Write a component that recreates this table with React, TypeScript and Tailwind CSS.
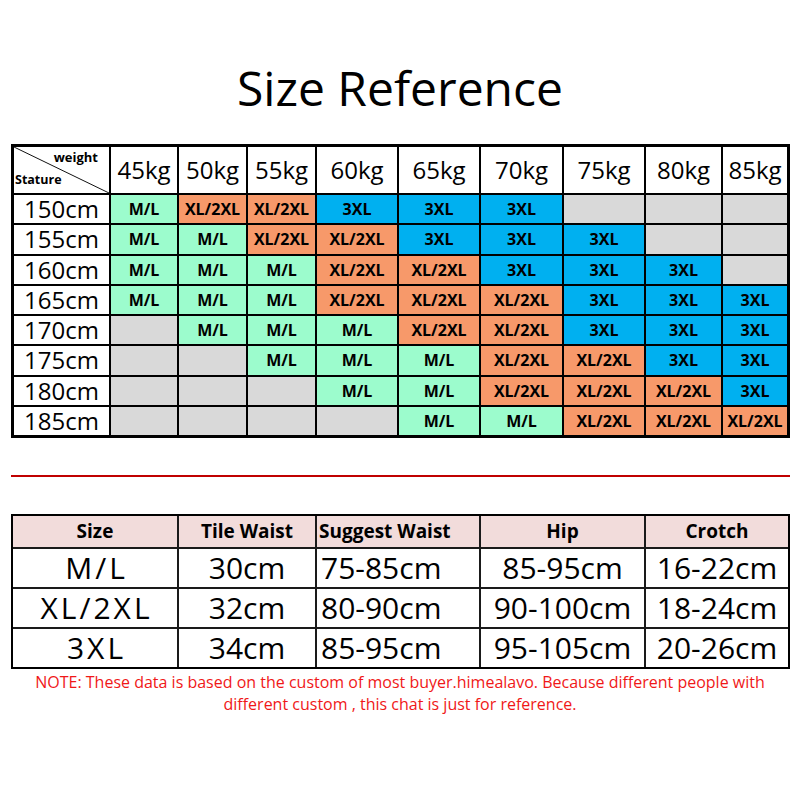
import React from 'react';

const weights = ['45kg', '50kg', '55kg', '60kg', '65kg', '70kg', '75kg', '80kg', '85kg'];

// g = M/L, o = XL/2XL, b = 3XL, - = empty
const chart: [string, string][] = [
  ['150cm', 'goobbb---'],
  ['155cm', 'ggoobbb--'],
  ['160cm', 'gggoobbb-'],
  ['165cm', 'gggooobbb'],
  ['170cm', '-gggoobbb'],
  ['175cm', '--gggoobb'],
  ['180cm', '---ggooob'],
  ['185cm', '----ggooo'],
];

const cellStyle: Record<string, { bg: string; label: string }> = {
  g: { bg: 'bg-[#9cfccd]', label: 'M/L' },
  o: { bg: 'bg-[#f7996a]', label: 'XL/2XL' },
  b: { bg: 'bg-[#00b0f0]', label: '3XL' },
  '-': { bg: 'bg-[#d9d9d9]', label: '' },
};

const sizes = [
  ['M/L', '30cm', '75-85cm', '85-95cm', '16-22cm'],
  ['XL/2XL', '32cm', '80-90cm', '90-100cm', '18-24cm'],
  ['3XL', '34cm', '85-95cm', '95-105cm', '20-26cm'],
];

export default function App() {
  return (
    <div className="w-[800px] h-[800px] bg-white text-black font-['Open_Sans','Noto_Sans',sans-serif]">
      <div className="h-[144px] pt-[58px] text-center text-[48px] leading-[60px]">Size Reference</div>

      {/* weight / stature chart */}
      <div className="ml-[11px] w-[779px] border-[3px] border-black bg-black grid grid-cols-[95px_66px_67px_67px_80px_80px_81px_80px_75px_64px] gap-[2px]">
        <div className="relative h-[46px] bg-white">
          <svg className="absolute inset-0" width="95" height="46" viewBox="0 0 95 46">
            <line x1="0" y1="0" x2="95" y2="46" stroke="#111" strokeWidth="1" />
          </svg>
          <span className="absolute right-[11px] top-[4px] text-[13px] font-bold leading-none">weight</span>
          <span className="absolute left-[1px] bottom-[7px] text-[12.5px] font-bold leading-none">Stature</span>
        </div>
        {weights.map(w => (
          <div key={w} className="h-[46px] bg-white flex items-center justify-center text-[24px]">
            {w}
          </div>
        ))}
        {chart.map(([stature, row]) => (
          <React.Fragment key={stature}>
            <div className="h-[28.25px] bg-white flex items-center justify-center text-[24px] leading-none">
              {stature}
            </div>
            {row.split('').map((c, i) => (
              <div
                key={i}
                className={`h-[28.25px] ${cellStyle[c].bg} flex items-center justify-center text-[16px] font-bold`}
              >
                {cellStyle[c].label}
              </div>
            ))}
          </React.Fragment>
        ))}
      </div>

      <div className="ml-[11px] mt-[37px] w-[779px] h-[2px] bg-[#c00000]" />

      {/* size table */}
      <div className="ml-[11px] mt-[37px] w-[779px] border-2 border-black bg-[#1a1a1a] grid grid-cols-[164px_136px_162px_163px_142px] gap-[2px]">
        {['Size', 'Tile Waist', 'Suggest Waist', 'Hip', 'Crotch'].map((h, i) => (
          <div
            key={h}
            className={`h-[31px] bg-[#f2dcdb] flex items-center text-[19px] font-bold ${i === 2 ? 'justify-start pl-[2px]' : 'justify-center'}`}
          >
            {h}
          </div>
        ))}
        {sizes.map(row =>
          row.map((v, i) => (
            <div
              key={row[0] + i}
              className={`h-[38px] bg-white flex items-center leading-[36px] ${i === 0 ? 'text-[30px] tracking-[3px] pl-[3px]' : 'text-[30px]'} ${i === 2 ? 'justify-start pl-[4px]' : 'justify-center'}`}
            >
              {v}
            </div>
          ))
        )}
      </div>

      <p className="mt-[2px] text-center text-[16px] leading-[22px] text-[#f01818] px-[20px]">
        NOTE: These data is based on the custom of most buyer.himealavo. Because different people with
        <br />
        different custom , this chat is just for reference.
      </p>
    </div>
  );
}
